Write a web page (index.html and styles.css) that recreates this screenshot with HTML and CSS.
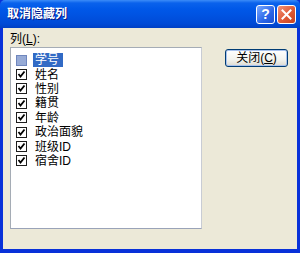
FILE: index.html
```html
<!DOCTYPE html>
<html lang="zh-CN">
<head>
    <meta charset="UTF-8">
    <title>取消隐藏列</title>
    <link rel="stylesheet" href="styles.css">
</head>
<body>

    <div class="window">
        <div class="titlebar">
            <span class="title">取消隐藏列</span>
            <div class="controls">
                <span class="tb help">?</span>
                <span class="tb close">
                    <svg width="11" height="11" viewBox="0 0 11 11">
                        <path d="M1.5 1.5 L9.5 9.5 M9.5 1.5 L1.5 9.5" stroke="#fff" stroke-width="2" stroke-linecap="square"/>
                    </svg>
                </span>
            </div>
        </div>

        <div class="client">
            <div class="left">
                <div class="label">列(<u>L</u>):</div>
                <ul class="list">
                    <li class="item"><span class="box selected"></span><span class="text current">学号</span></li>
                    <li class="item"><span class="box checked"></span><span class="text">姓名</span></li>
                    <li class="item"><span class="box checked"></span><span class="text">性别</span></li>
                    <li class="item"><span class="box checked"></span><span class="text">籍贯</span></li>
                    <li class="item"><span class="box checked"></span><span class="text">年龄</span></li>
                    <li class="item"><span class="box checked"></span><span class="text">政治面貌</span></li>
                    <li class="item"><span class="box checked"></span><span class="text">班级ID</span></li>
                    <li class="item"><span class="box checked"></span><span class="text">宿舍ID</span></li>
                </ul>
            </div>
            <div class="right">
                <button class="btn">关闭(<u>C</u>)</button>
            </div>
        </div>
    </div>

</body>
</html>
```

FILE: styles.css
```css
body {
    margin: 0;
    padding: 0;
    font-family: "Liberation Sans", "Noto Sans CJK SC", sans-serif;
    font-size: 12px;
    color: #000;
}
.window {
    width: 300px;
    height: 253px;
    display: flex;
    flex-direction: column;
    background-color: #0831d9;
}
.titlebar {
    height: 28px;
    flex: none;
    display: flex;
    align-items: center;
    justify-content: space-between;
    padding: 0 4px 0 7px;
    box-sizing: border-box;
    border-radius: 5px 5px 0 0;
    background: linear-gradient(#3c8cf8 0, #0a62ec 3px, #0058e8 9px, #0054e3 50%, #004ad6 85%, #0040c4 100%);
}
.title {
    line-height: 16px;
    color: #fff;
    font-weight: bold;
    font-size: 12px;
    text-shadow: 1px 1px #0a1883;
}
.controls {
    display: flex;
    gap: 2px;
}
.tb {
    width: 19px;
    height: 19px;
    box-sizing: border-box;
    border: 1px solid #fff;
    border-radius: 3px;
    display: flex;
    align-items: center;
    justify-content: center;
    color: #fff;
    font-weight: bold;
    font-size: 14px;
    line-height: 14px;
}
.help {
    background: linear-gradient(135deg, #7aa8ff, #2a66e8 60%, #1c50d0);
}
.close {
    background: linear-gradient(135deg, #f0937a, #e05a35 55%, #c6421f);
}
.client {
    flex: 1;
    display: flex;
    gap: 23px;
    margin: 0 3px 4px 3px;
    padding: 4px 0 0 7px;
    background-color: #ece9d8;
}
.label {
    height: 14px;
    line-height: 14px;
    margin-bottom: 1px;
}
.list {
    list-style: none;
    margin: 0;
    padding: 5px 0 0 5px;
    width: 192px;
    height: 182px;
    box-sizing: border-box;
    background-color: #fff;
    border: 1px solid #a5acb5;
    border-right-color: #c8ccd4;
    border-bottom-color: #9aa3b8;
}
.item {
    height: 14.4px;
    display: flex;
    align-items: center;
}
.box {
    width: 11px;
    height: 11px;
    box-sizing: border-box;
    border: 1px solid #1e1e1e;
    background-color: #fff;
    margin-right: 6px;
}
.box.checked {
    background: #fff url("data:image/svg+xml;utf8,<svg xmlns='http://www.w3.org/2000/svg' width='9' height='9'><path d='M1.5 4 L3.5 6.5 L7.5 1.5' fill='none' stroke='black' stroke-width='1.8'/></svg>") no-repeat center;
}
.box.selected {
    background-color: #97abd6;
    border-color: #6f86bd;
}
.text {
    display: inline-block;
    height: 13px;
    line-height: 13px;
    padding: 1px 2px 0 2px;
}
.text.current {
    background-color: #316ac5;
    color: #fff;
    padding-right: 4px;
}
.right {
    padding-top: 17px;
}
.btn {
    width: 63px;
    height: 18px;
    padding: 0;
    font-family: "Liberation Sans", "Noto Sans CJK SC", sans-serif;
    font-size: 12px;
    line-height: 14px;
    color: #000;
    border: 1px solid #003c74;
    border-radius: 3px;
    background: linear-gradient(#ffffff, #f3f3ee 60%, #dcdad0);
    box-shadow: inset 0 0 0 1px #a8c2ee;
}
```
